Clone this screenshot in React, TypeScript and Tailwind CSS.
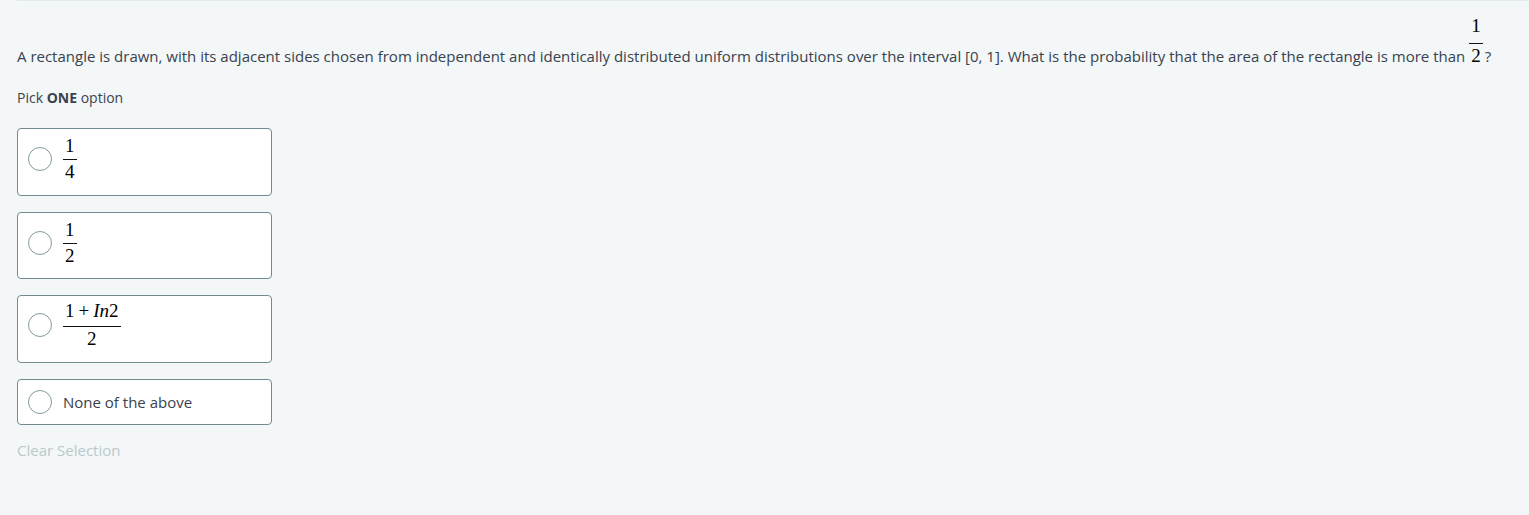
import React, { useState } from 'react';

const mathFont = { fontFamily: '"Liberation Serif", "DejaVu Serif", serif' };

// Stacked fraction; the inline-block baseline is the denominator's baseline
const Frac = ({
  num,
  den,
  gapTop = 'pb-[3px]',
  gapBottom = 'pt-[2px]',
}: {
  num: React.ReactNode;
  den: React.ReactNode;
  gapTop?: string;
  gapBottom?: string;
}) => (
  <span className="inline-block text-center align-baseline text-[19px] text-black" style={mathFont}>
    <span className={`block leading-[20px] px-[2px] border-b border-[#111] ${gapTop}`}>{num}</span>
    <span className={`block leading-[20px] ${gapBottom}`}>{den}</span>
  </span>
);

const OPTIONS = [
  { id: 'a', pad: 'pt-[7px] pb-[13px]', label: <Frac num="1" den="4" /> },
  { id: 'b', pad: 'pt-[7px] pb-[12px]', label: <Frac num="1" den="2" /> },
  {
    id: 'c',
    pad: 'pt-[5px] pb-[13px]',
    label: (
      <Frac
        gapTop="pb-[5px]"
        num={
          <>
            1<span className="mx-[4px]">+</span>
            <i>In</i>2
          </>
        }
        den="2"
      />
    ),
  },
  {
    id: 'd',
    pad: 'py-[10px]',
    label: <span className="text-[15px] leading-[20px] text-[#39424e]">None of the above</span>,
  },
];

export default function App() {
  const [selected, setSelected] = useState<string | null>(null);

  return (
    <div
      className="min-h-[515px] bg-[#f3f7f7] text-[#39424e]"
      style={{ fontFamily: '"Open Sans", "Noto Sans", sans-serif' }}
    >
      <div className="ml-[17px] border-t border-[#e3eaec]" />
      <div className="px-[17px]">
        {/* Question */}
        <p className="pt-[15px] text-[15px] leading-[20px]">
          A rectangle is drawn, with its adjacent sides chosen from independent and identically distributed uniform
          distributions over the interval [0, 1]. What is the probability that the area of the rectangle is more than{' '}
          <Frac num="1" den="2" gapTop="pb-[7px]" />
          <span className="ml-[2px]">?</span>
        </p>

        <p className="mt-[22px] text-[14px] leading-[20px]">
          Pick <b className="font-bold">ONE</b> option
        </p>

        {/* Options */}
        <div className="mt-[20px] flex flex-col gap-[16px] w-[255px]">
          {OPTIONS.map((o) => (
            <button
              key={o.id}
              type="button"
              onClick={() => setSelected(o.id)}
              className={`flex items-center gap-[11px] pl-[10px] bg-white border border-[#718c91] rounded-[4px] text-left ${o.pad}`}
            >
              <span
                className={`w-[24px] h-[24px] shrink-0 rounded-full bg-white ${
                  selected === o.id ? 'border-[7px] border-[#1ba94c]' : 'border border-[#7f9a9e]'
                }`}
              />
              {o.label}
            </button>
          ))}
        </div>

        <button
          type="button"
          onClick={() => setSelected(null)}
          className="mt-[15px] text-[15px] leading-[20px] text-[#b9c9cc]"
        >
          Clear Selection
        </button>
      </div>
    </div>
  );
}
